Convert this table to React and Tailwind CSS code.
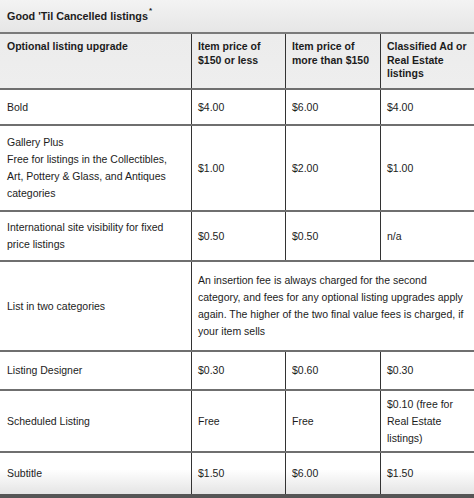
import React from 'react';

const rows = [
  { h: 'h-[36px]', cells: ['Bold', '$4.00', '$6.00', '$4.00'] },
  {
    h: 'h-[86px]',
    cells: [
      <>
        Gallery Plus
        <br />
        Free for listings in the Collectibles, Art, Pottery &amp; Glass, and Antiques categories
      </>,
      '$1.00',
      '$2.00',
      '$1.00',
    ],
  },
  { h: 'h-[50px]', cells: ['International site visibility for fixed price listings', '$0.50', '$0.50', 'n/a'] },
  {
    h: 'h-[90px]',
    span: true,
    cells: [
      'List in two categories',
      'An insertion fee is always charged for the second category, and fees for any optional listing upgrades apply again. The higher of the two final value fees is charged, if your item sells',
    ],
  },
  { h: 'h-[39px]', cells: ['Listing Designer', '$0.30', '$0.60', '$0.30'] },
  { h: 'h-[62px]', cells: ['Scheduled Listing', 'Free', 'Free', '$0.10 (free for Real Estate listings)'] },
];

const widths = ['w-[191px]', 'w-[94px]', 'w-[95px]', 'w-[94px]'];

const App = () => {
  return (
    <div className="w-[474px] h-[498px] overflow-hidden bg-white text-[#1c1c1c] text-[10.5px] leading-[17px] font-['Liberation_Sans',Arial,sans-serif]">
      <div className="h-[34px] flex items-center px-[7px] border-b-2 border-[#7a7a7a] bg-gradient-to-b from-[#f3f3f3] to-[#e6e6e6] font-bold text-[10.8px]">
        Good 'Til Cancelled listings<sup className="text-[8px] -top-[5px] ml-[1px]">*</sup>
      </div>

      <div className="h-[56px] flex border-b-2 border-[#6f6f6f] bg-gradient-to-b from-[#ececec] to-[#eeeeee] font-bold leading-[13.5px]">
        <div className={`${widths[0]} px-[7px] pt-[6px]`}>Optional listing upgrade</div>
        <div className={`${widths[1]} border-l border-[#333] px-[6px] pt-[6px]`}>Item price of $150 or less</div>
        <div className={`${widths[2]} border-l border-[#333] px-[6px] pt-[6px]`}>Item price of more than $150</div>
        <div className={`${widths[3]} border-l border-[#333] px-[6px] pt-[6px]`}>Classified Ad or Real Estate listings</div>
      </div>

      {rows.map((row, i) => (
        <div key={i} className={`${row.h} flex border-b-2 border-[#6f6f6f]`}>
          <div className={`${widths[0]} flex items-center px-[7px]`}>
            <div>{row.cells[0]}</div>
          </div>
          {row.span ? (
            <div className="w-[283px] border-l border-[#333] flex items-center px-[6px] pr-[4px]">
              <div>{row.cells[1]}</div>
            </div>
          ) : (
            row.cells.slice(1).map((c, j) => (
              <div key={j} className={`${widths[j + 1]} border-l border-[#333] flex items-center px-[6px]`}>
                <div>{c}</div>
              </div>
            ))
          )}
        </div>
      ))}

      <div className="h-[45px] flex border-b-4 border-[#555] bg-gradient-to-b from-white from-40% to-[#e4e4e4]">
        <div className={`${widths[0]} flex items-center px-[7px]`}>Subtitle</div>
        <div className={`${widths[1]} border-l border-[#333] flex items-center px-[6px]`}>$1.50</div>
        <div className={`${widths[2]} border-l border-[#333] flex items-center px-[6px]`}>$6.00</div>
        <div className={`${widths[3]} border-l border-[#333] flex items-center px-[6px]`}>$1.50</div>
      </div>
    </div>
  );
};

export default App;
